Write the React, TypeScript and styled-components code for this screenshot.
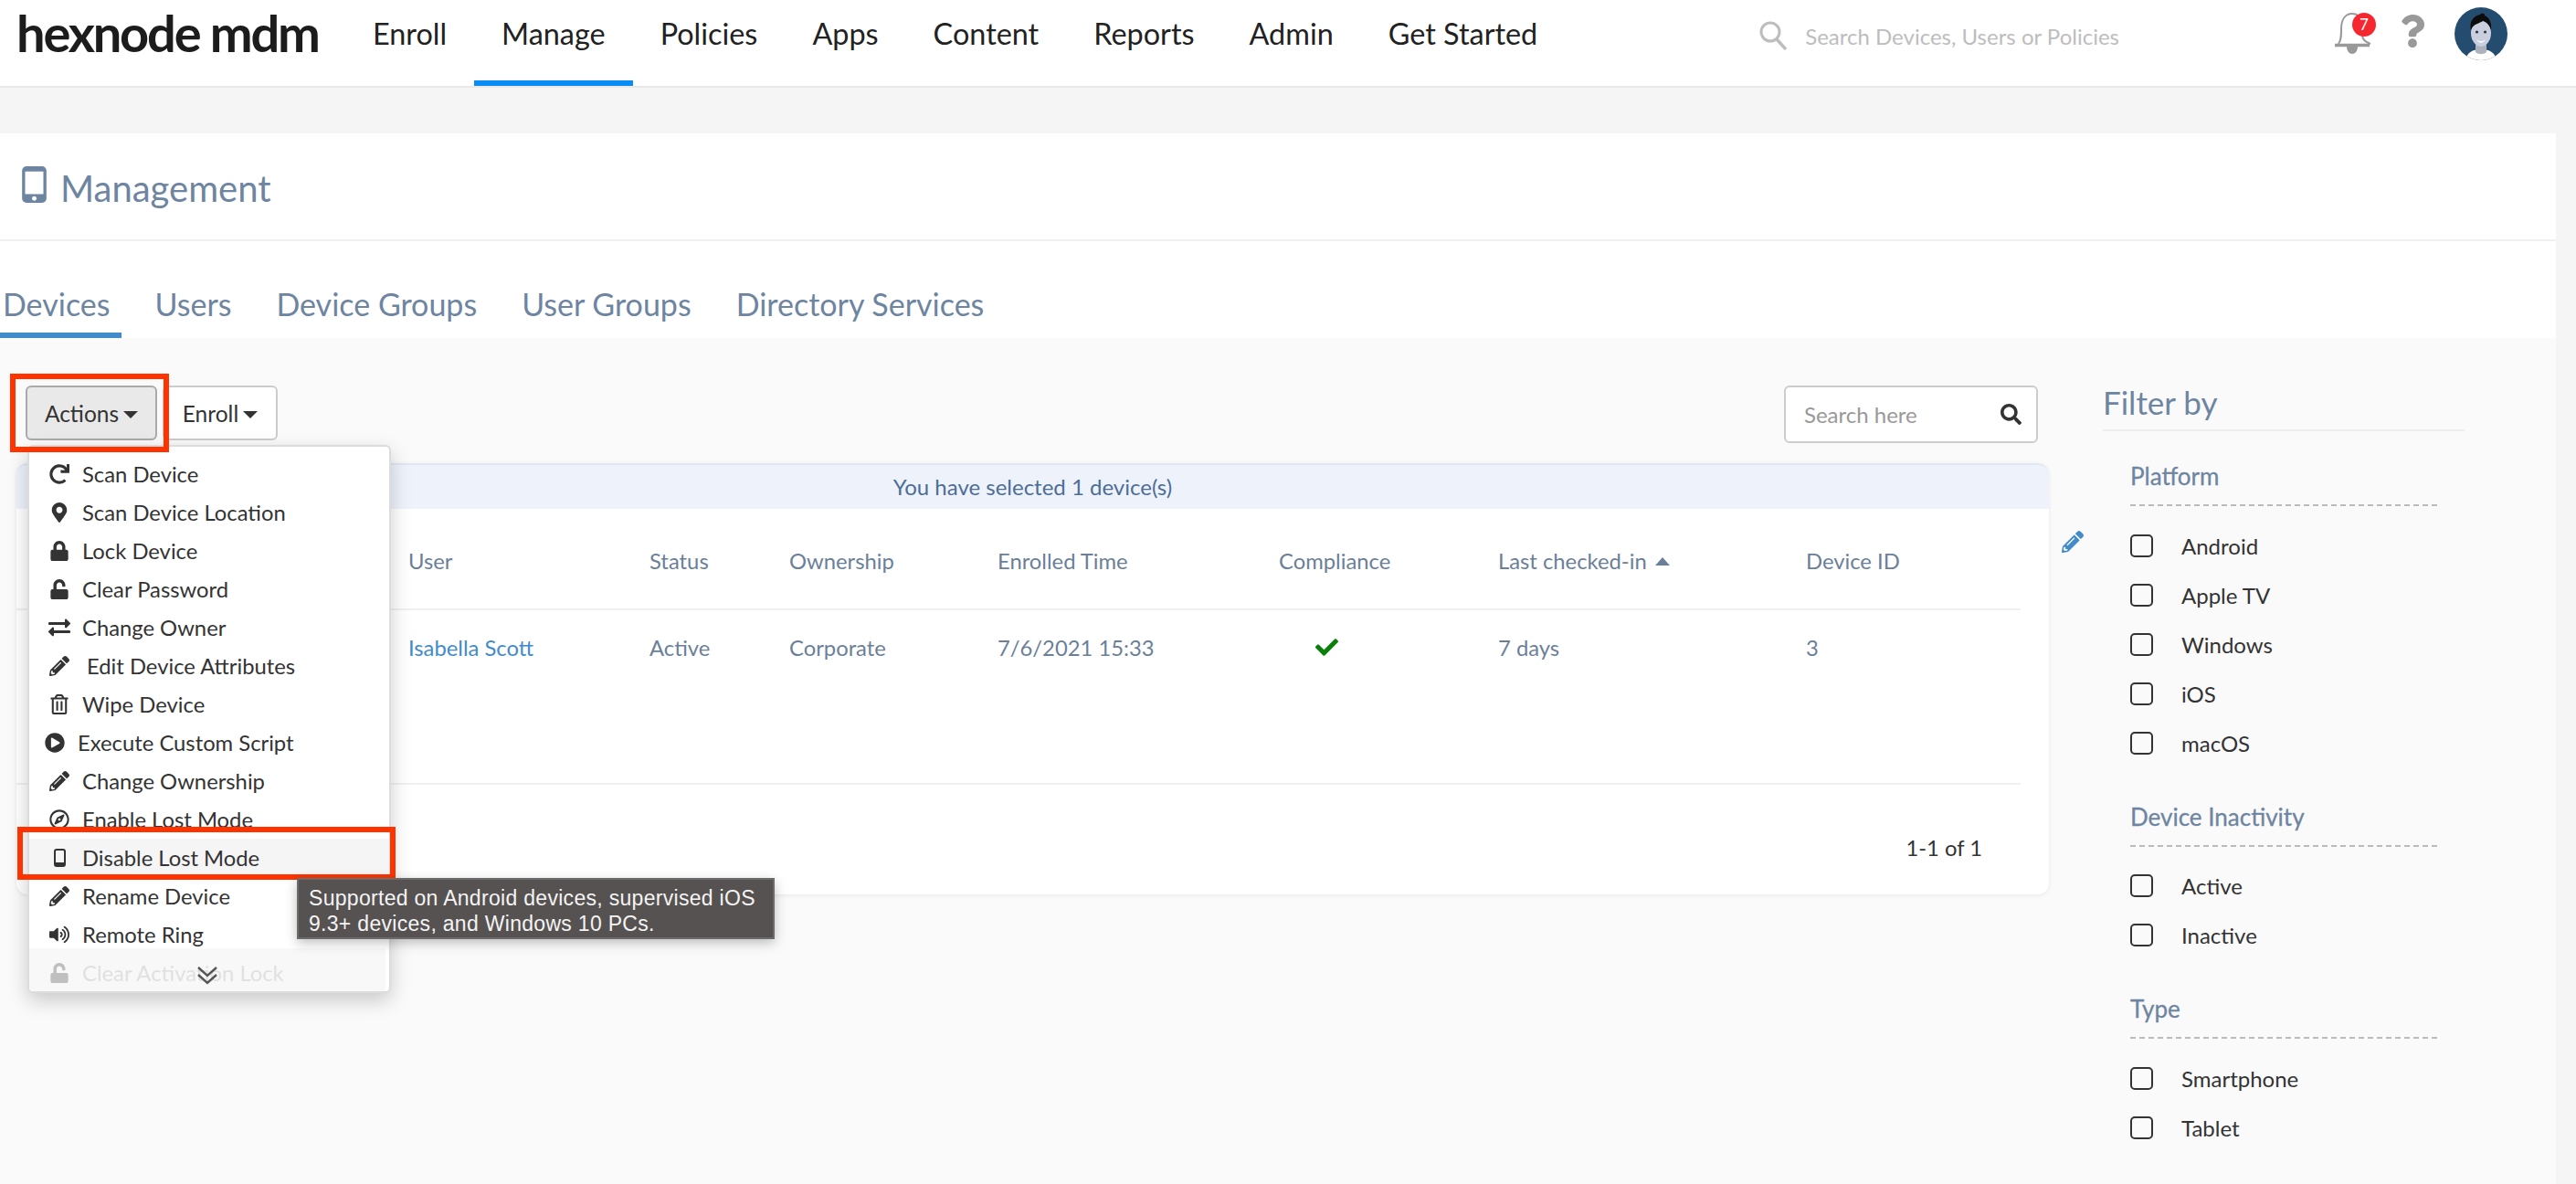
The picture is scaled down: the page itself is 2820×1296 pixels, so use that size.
import React from 'react';
import styled, { createGlobalStyle } from 'styled-components';
import {
  FaRedo, FaMapMarkerAlt, FaLock, FaUnlock, FaExchangeAlt, FaPencilAlt, FaRegTrashAlt,
  FaPlayCircle, FaRegCompass, FaVolumeUp, FaCheck, FaSearch, FaQuestion,
} from 'react-icons/fa';

const Global = createGlobalStyle`
  html, body { margin: 0; padding: 0; width: 2820px; height: 1296px; overflow: hidden; background: #f5f5f5; }
  body { font-family: Lato, "Liberation Sans", sans-serif; }
  * { box-sizing: border-box; }
`;

const Page = styled.div`
  width: 2820px;
  height: 1296px;
  display: flex;
  flex-direction: column;
  background: #f5f5f5;
`;

const Navbar = styled.header`
  height: 96px;
  flex: none;
  display: flex;
  align-items: stretch;
  background: #fff;
  border-bottom: 2px solid #e8e8e8;
`;

const Logo = styled.div`
  margin-left: 18px;
  width: 330px;
  font-size: 56px;
  font-weight: 700;
  line-height: 72px;
  letter-spacing: -2.2px;
  color: #1c1c1c;
  white-space: nowrap;
`;

const NavList = styled.nav`
  display: flex;
  margin-left: 30px;
`;

const NavItem = styled.a<{ $active?: boolean }>`
  height: 94px;
  padding: 14px 30px 0;
  font-size: 32.4px;
  line-height: 46px;
  color: #222;
  white-space: nowrap;
  border-bottom: 6px solid ${(p) => (p.$active ? '#0a8cf5' : 'transparent')};
`;

const GlobalSearch = styled.div`
  margin-left: 213px;
  display: flex;
  align-items: center;
  height: 78px;
  gap: 20px;
  color: #bdbdbd;
  font-size: 24px;
`;

const NavTools = styled.div`
  margin-left: auto;
  padding-right: 74px;
  display: flex;
  align-items: flex-start;
`;

const BellWrap = styled.div`
  position: relative;
  width: 42px;
  height: 46px;
  margin-top: 14px;
`;

const Badge = styled.span`
  position: absolute;
  left: 20px;
  top: 0;
  width: 26px;
  height: 26px;
  border-radius: 50%;
  background: #f5282f;
  color: #fff;
  font-size: 17px;
  line-height: 26px;
  text-align: center;
`;

const Help = styled.div`
  margin: 16px 0 0 26px;
  color: #999;
  font-size: 36px;
  height: 36px;
  line-height: 0;
`;

const AvatarWrap = styled.div`
  margin: 7px 0 0 27px;
  width: 60px;
  height: 60px;
`;

const Main = styled.main`
  width: 2798px;
  margin-top: 50px;
  flex: 1;
  display: flex;
  flex-direction: column;
`;

const TitleBar = styled.div`
  height: 118px;
  flex: none;
  display: flex;
  align-items: center;
  gap: 15px;
  padding-left: 24px;
  background: #fff;
  border-bottom: 2px solid #f0f0f0;
  svg { margin-top: -4px; }
`;

const Title = styled.h1`
  margin: 3px 0 0;
  font-size: 40px;
  font-weight: 400;
  color: #6e85a2;
`;

const TabBar = styled.div`
  height: 106px;
  flex: none;
  display: flex;
  align-items: flex-end;
  gap: 34px;
  background: #fff;
`;

const Tab = styled.a<{ $active?: boolean }>`
  padding: 3px 12px 0 3px;
  height: 64px;
  font-size: 34px;
  line-height: 48px;
  color: #6e85a2;
  white-space: nowrap;
  border-bottom: 6px solid ${(p) => (p.$active ? '#428bca' : 'transparent')};
`;

const Content = styled.div`
  flex: 1;
  display: flex;
  background: #fafafa;
`;

const LeftCol = styled.div`
  margin-left: 18px;
  width: 2284px;
  padding-top: 52px;
`;

const Toolbar = styled.div`
  position: relative;
  width: 2203px;
  height: 85px;
  margin-left: 10px;
  display: flex;
  align-items: flex-start;
  gap: 6px;
`;

const DropButton = styled.button<{ $open?: boolean }>`
  height: 60px;
  width: ${(p) => (p.$open ? 144 : 126)}px;
  display: flex;
  align-items: center;
  justify-content: center;
  gap: 5px;
  padding: 0;
  font-family: Lato, sans-serif;
  font-size: 24.5px;
  color: #333;
  background: ${(p) => (p.$open ? '#e9e9e9' : '#fff')};
  border: 2px solid ${(p) => (p.$open ? '#aaa' : '#ccc')};
  border-radius: 6px;
`;

const Caret = styled.i`
  width: 0;
  height: 0;
  margin-top: 3px;
  border-left: 8px solid transparent;
  border-right: 8px solid transparent;
  border-top: 8px solid #333;
`;

const SearchBox = styled.div`
  margin-left: auto;
  width: 278px;
  height: 63px;
  display: flex;
  align-items: center;
  justify-content: space-between;
  padding: 0 16px 0 20px;
  background: #fff;
  border: 2px solid #ccc;
  border-radius: 6px;
  font-size: 24px;
  color: #999;
  svg { color: #333; font-size: 23px; }
`;

const Callout = styled.div`
  position: absolute;
  border: 6px solid #ff3300;
  pointer-events: none;
`;

const ActionsCallout = styled(Callout)`
  left: -17px;
  top: -13px;
  width: 174px;
  height: 86px;
  z-index: 4;
`;

const MenuWrap = styled.div`
  position: absolute;
  left: 2px;
  top: 65px;
  width: 398px;
  z-index: 3;
`;

const Menu = styled.ul`
  position: relative;
  margin: 0;
  height: 600px;
  padding: 9px 0 0;
  list-style: none;
  overflow: hidden;
  background: #fff;
  border: 2px solid #dcdcdc;
  border-radius: 6px;
  box-shadow: 0 8px 22px rgba(0, 0, 0, 0.2);
`;

const MenuItem = styled.li<{ $active?: boolean; $shift?: number; $textShift?: number; $muted?: boolean }>`
  height: 42px;
  display: flex;
  align-items: center;
  padding-left: ${(p) => 18 + (p.$shift ?? 0)}px;
  font-size: 23.8px;
  color: ${(p) => (p.$muted ? '#aaa' : '#333')};
  background: ${(p) => (p.$active ? '#f5f5f5' : 'transparent')};
  white-space: nowrap;
  span { margin-left: ${(p) => 10 + (p.$textShift ?? 0)}px; }
`;

const MenuIcon = styled.i<{ $size?: number }>`
  flex: none;
  width: 30px;
  display: flex;
  justify-content: center;
  font-size: ${(p) => p.$size ?? 22}px;
  color: #333;
`;

const MenuFade = styled.div`
  position: absolute;
  left: 0;
  right: 4px;
  bottom: 0;
  height: 47px;
  display: flex;
  justify-content: center;
  align-items: center;
  padding-top: 12px;
  background: rgba(245, 245, 245, 0.72);
`;

const DisableCallout = styled(Callout)`
  left: -11px;
  top: 418px;
  width: 414px;
  height: 58px;
`;

const Tooltip = styled.div`
  position: absolute;
  left: 295px;
  top: 474px;
  width: 523px;
  height: 67px;
  padding: 6px 0 0 11px;
  background: #565251;
  border: 2px solid #6b6b6b;
  color: #f4f4f4;
  font-family: "Liberation Sans", Arial, sans-serif;
  font-size: 23px;
  line-height: 28px;
  letter-spacing: 0.3px;
  white-space: nowrap;
  box-shadow: 0 4px 12px rgba(0, 0, 0, 0.25);
`;

const CardRow = styled.div`
  display: flex;
  align-items: flex-start;
  gap: 14px;
`;

const Card = styled.section`
  width: 2225px;
  flex: none;
  border-radius: 12px;
  background: #fff;
  box-shadow: 0 1px 4px rgba(0, 0, 0, 0.08);
`;

const Banner = styled.div`
  height: 50px;
  background: #eef3fb;
  border-top: 2px solid #e1e8f4;
  border-radius: 12px 12px 0 0;
  text-align: center;
  font-size: 24px;
  line-height: 48px;
  color: #4d6d97;
`;

const TableRow = styled.div<{ $height: number }>`
  display: grid;
  grid-template-columns: 429px 264px 153px 228px 308px 240px 337px 1fr;
  height: ${(p) => p.$height}px;
  margin-right: 31px;
  border-bottom: 2px solid #f0f0f0;
  font-size: 23.8px;
  line-height: 34px;
  color: #6b7f99;
  white-space: nowrap;
`;

const HeadCell = styled.div<{ $pos: number }>`
  grid-column: ${(p) => p.$pos};
  padding-top: 40px;
  display: flex;
  align-items: flex-start;
  gap: 9px;
`;

const BodyCell = styled.div<{ $pos: number; $link?: boolean; $indent?: number }>`
  grid-column: ${(p) => p.$pos};
  padding-top: 24px;
  padding-left: ${(p) => p.$indent ?? 0}px;
  color: ${(p) => (p.$link ? '#428bca' : 'inherit')};
  svg { color: #0a800a; font-size: 25px; margin-top: 4px; }
`;

const SortArrow = styled.i`
  width: 0;
  height: 0;
  margin-top: 13px;
  border-left: 8px solid transparent;
  border-right: 8px solid transparent;
  border-bottom: 9px solid #6b7f99;
`;

const CardFooter = styled.div`
  height: 120px;
  padding: 52px 73px 0 0;
  text-align: right;
  font-size: 23.8px;
  line-height: 34px;
  color: #333;
`;

const EditLink = styled.a`
  margin-top: 74px;
  color: #428bca;
  font-size: 24px;
  line-height: 0;
`;

const Aside = styled.aside`
  margin-left: 0;
  width: 396px;
  padding-top: 50px;
`;

const FilterTitle = styled.h2`
  margin: 0;
  height: 52px;
  border-bottom: 2px solid #eeeeee;
  font-size: 35px;
  font-weight: 400;
  line-height: 40px;
  color: #6e85a2;
`;

const FilterGroup = styled.div`
  margin: 33px 0 0 30px;
  width: 336px;
  & + & { margin-top: 37.5px; }
`;

const GroupTitle = styled.h3`
  margin: 0 0 16px;
  height: 49px;
  padding-bottom: 15px;
  border-bottom: 2px dashed #bbb;
  font-size: 26px;
  font-weight: 400;
  line-height: 32px;
  color: #6e85a2;
  -webkit-text-stroke: 0.3px #6e85a2;
`;

const CheckRow = styled.label`
  height: 54px;
  display: flex;
  align-items: center;
  font-size: 24px;
  color: #333;
`;

const Box = styled.i`
  width: 25px;
  height: 25px;
  margin-right: 31px;
  border: 2px solid #333;
  border-radius: 5px;
`;

const PhoneIcon = () => (
  <svg width="27" height="40" viewBox="0 0 28 42">
    <rect width="28" height="42" rx="5" fill="#6e85a2" />
    <rect x="3.5" y="6" width="21" height="26" fill="#fff" />
    <circle cx="14" cy="37" r="2.6" fill="#fff" />
  </svg>
);

const SmallPhone = () => (
  <svg width="13" height="20" viewBox="0 0 13 20">
    <rect x="1" y="1" width="11" height="18" rx="2" fill="none" stroke="#333" strokeWidth="2" />
    <rect x="1" y="15" width="11" height="4" fill="#333" />
  </svg>
);

const TopSearchIcon = () => (
  <svg width="30" height="32" viewBox="0 0 30 32" fill="none" stroke="#bdbdbd" strokeWidth="3">
    <circle cx="12" cy="12" r="10" />
    <path d="M19 20l10 11" strokeWidth="3.4" />
  </svg>
);

const BellIcon = () => (
  <svg width="42" height="46" viewBox="0 0 42 46" fill="none" stroke="#999" strokeWidth="2">
    <path d="M5 34c3-4 3-9 3-16C8 8 12 1 20 1c6 0 9 3 11 8v15c0 5 3 8 9 10" />
    <path d="M1 35.5h38" strokeWidth="3.5" />
    <path d="M14 37h12c0 5-3 8-6 8s-6-3-6-8z" fill="#999" stroke="none" />
  </svg>
);

const AvatarIcon = () => (
  <svg width="60" height="60" viewBox="0 0 60 60">
    <defs>
      <clipPath id="avatarClip"><circle cx="30" cy="30" r="29" /></clipPath>
    </defs>
    <g clipPath="url(#avatarClip)">
      <rect width="60" height="60" fill="#234c6f" />
      <path d="M13 60c1-9 7-13 17-13s16 4 17 13z" fill="#fff" />
      <path d="M24 42h12v8c-3 3-9 3-12 0z" fill="#aeb2bc" />
      <ellipse cx="30" cy="29" rx="11" ry="15" fill="#c9cfdf" />
      <path d="M19 26c-2-8 2-16 10-17 2-2 5-2 5 1 5 2 8 8 7 16-2-6-5-9-9-10-4 3-11 3-13 10z" fill="#0c0c0c" />
      <circle cx="25.5" cy="28" r="1.6" fill="#333" />
      <circle cx="34.5" cy="28" r="1.6" fill="#333" />
      <path d="M25 36c3 3 7 3 10 0-2 5-8 5-10 0z" fill="#fff" />
    </g>
  </svg>
);

const DoubleChevron = () => (
  <svg width="24" height="22" viewBox="0 0 24 22" fill="none" stroke="#555" strokeWidth="2.4">
    <path d="M2 2l10 9 10-9" />
    <path d="M2 10l10 9 10-9" />
  </svg>
);

const navLinks = ['Enroll', 'Manage', 'Policies', 'Apps', 'Content', 'Reports', 'Admin', 'Get Started'];
const tabs = ['Devices', 'Users', 'Device Groups', 'User Groups', 'Directory Services'];

const menuItems: { label: string; icon: React.ReactNode; size?: number; shift?: number; textShift?: number; active?: boolean }[] = [
  { label: 'Scan Device', icon: <FaRedo /> },
  { label: 'Scan Device Location', icon: <FaMapMarkerAlt /> },
  { label: 'Lock Device', icon: <FaLock /> },
  { label: 'Clear Password', icon: <FaUnlock /> },
  { label: 'Change Owner', icon: <FaExchangeAlt />, size: 24 },
  { label: 'Edit Device Attributes', icon: <FaPencilAlt />, textShift: 5 },
  { label: 'Wipe Device', icon: <FaRegTrashAlt /> },
  { label: 'Execute Custom Script', icon: <FaPlayCircle />, shift: -5 },
  { label: 'Change Ownership', icon: <FaPencilAlt /> },
  { label: 'Enable Lost Mode', icon: <FaRegCompass /> },
  { label: 'Disable Lost Mode', icon: <SmallPhone />, active: true },
  { label: 'Rename Device', icon: <FaPencilAlt /> },
  { label: 'Remote Ring', icon: <FaVolumeUp /> },
];

const filters = [
  { title: 'Platform', options: ['Android', 'Apple TV', 'Windows', 'iOS', 'macOS'] },
  { title: 'Device Inactivity', options: ['Active', 'Inactive'] },
  { title: 'Type', options: ['Smartphone', 'Tablet'] },
];

export default function App() {
  return (
    <Page>
      <Global />
      <Navbar>
        <Logo>hexnode mdm</Logo>
        <NavList>
          {navLinks.map((n) => (
            <NavItem key={n} $active={n === 'Manage'}>{n}</NavItem>
          ))}
        </NavList>
        <GlobalSearch>
          <TopSearchIcon />
          Search Devices, Users or Policies
        </GlobalSearch>
        <NavTools>
          <BellWrap>
            <BellIcon />
            <Badge>7</Badge>
          </BellWrap>
          <Help><FaQuestion /></Help>
          <AvatarWrap><AvatarIcon /></AvatarWrap>
        </NavTools>
      </Navbar>
      <Main>
        <TitleBar>
          <PhoneIcon />
          <Title>Management</Title>
        </TitleBar>
        <TabBar>
          {tabs.map((t) => (
            <Tab key={t} $active={t === 'Devices'}>{t}</Tab>
          ))}
        </TabBar>
        <Content>
          <LeftCol>
            <Toolbar>
              <ActionsCallout />
              <DropButton $open>Actions <Caret /></DropButton>
              <DropButton>Enroll <Caret /></DropButton>
              <SearchBox>Search here <FaSearch /></SearchBox>
              <MenuWrap>
                <Menu>
                  {menuItems.map((m) => (
                    <MenuItem key={m.label} $active={m.active} $shift={m.shift} $textShift={m.textShift}>
                      <MenuIcon $size={m.size}>{m.icon}</MenuIcon>
                      <span>{m.label}</span>
                    </MenuItem>
                  ))}
                  <MenuItem $muted>
                    <MenuIcon><FaUnlock /></MenuIcon>
                    <span>Clear Activation Lock</span>
                  </MenuItem>
                  <MenuFade><DoubleChevron /></MenuFade>
                </Menu>
                <DisableCallout />
                <Tooltip>
                  Supported on Android devices, supervised iOS<br />
                  9.3+ devices, and Windows 10 PCs.
                </Tooltip>
              </MenuWrap>
            </Toolbar>
            <CardRow>
              <Card>
                <Banner>You have selected 1 device(s)</Banner>
                <TableRow $height={111}>
                  <HeadCell $pos={2}>User</HeadCell>
                  <HeadCell $pos={3}>Status</HeadCell>
                  <HeadCell $pos={4}>Ownership</HeadCell>
                  <HeadCell $pos={5}>Enrolled Time</HeadCell>
                  <HeadCell $pos={6}>Compliance</HeadCell>
                  <HeadCell $pos={7}>Last checked-in <SortArrow /></HeadCell>
                  <HeadCell $pos={8}>Device ID</HeadCell>
                </TableRow>
                <TableRow $height={191}>
                  <BodyCell $pos={2} $link>Isabella Scott</BodyCell>
                  <BodyCell $pos={3}>Active</BodyCell>
                  <BodyCell $pos={4}>Corporate</BodyCell>
                  <BodyCell $pos={5}>7/6/2021 15:33</BodyCell>
                  <BodyCell $pos={6} $indent={40}><FaCheck /></BodyCell>
                  <BodyCell $pos={7}>7 days</BodyCell>
                  <BodyCell $pos={8}>3</BodyCell>
                </TableRow>
                <CardFooter>1-1 of 1</CardFooter>
              </Card>
              <EditLink><FaPencilAlt /></EditLink>
            </CardRow>
          </LeftCol>
          <Aside>
            <FilterTitle>Filter by</FilterTitle>
            {filters.map((f) => (
              <FilterGroup key={f.title}>
                <GroupTitle>{f.title}</GroupTitle>
                {f.options.map((o) => (
                  <CheckRow key={o}>
                    <Box />
                    {o}
                  </CheckRow>
                ))}
              </FilterGroup>
            ))}
          </Aside>
        </Content>
      </Main>
    </Page>
  );
}
